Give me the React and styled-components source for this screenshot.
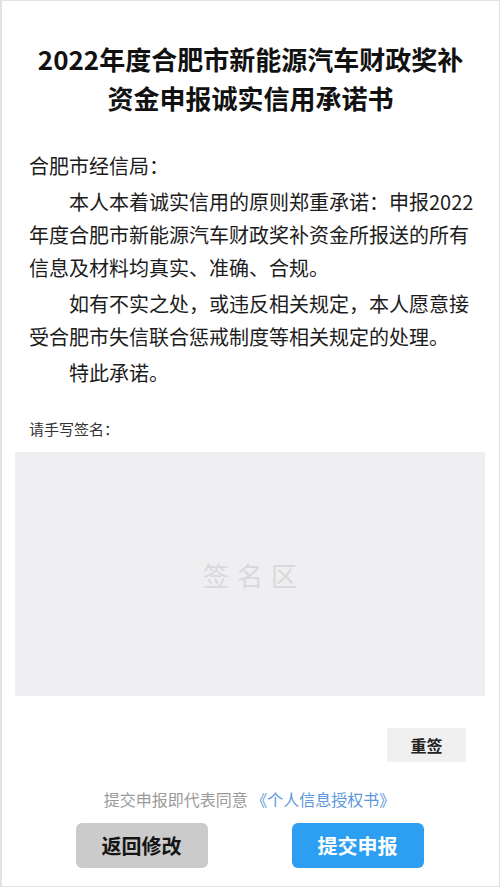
import React from "react";
import styled, { createGlobalStyle } from "styled-components";

const Global = createGlobalStyle`
  html, body { margin: 0; padding: 0; background: #fff; }
  * { box-sizing: border-box; }
  body { font-family: "Noto Sans CJK SC", "Noto Sans", sans-serif; }
`;

const Page = styled.div`
  width: 500px;
  height: 887px;
  border: 1px solid #e2e2e2;
  border-left-width: 2px;
  background: #fff;
  display: flex;
  flex-direction: column;
  padding-top: 38px;
  color: #1c1c1c;
`;

const Title = styled.h1`
  margin: 0;
  font-size: 26px;
  line-height: 39px;
  font-weight: 700;
  text-align: center;
  color: #111;
  letter-spacing: 0;
`;

const Letter = styled.div`
  margin-top: 32px;
  padding: 0 20px 0 27px;
  font-size: 20px;
  line-height: 33px;
  display: flex;
  flex-direction: column;
  gap: 3px;
`;

const Para = styled.p`
  margin: 0;
  text-indent: ${(p) => (p.$indent ? "2em" : "0")};
`;

const Label = styled.div`
  margin-top: 30px;
  padding-left: 27px;
  font-size: 15px;
  line-height: 20px;
  color: #333;
`;

const SignBox = styled.div`
  margin: 13px 14px 0 13px;
  height: 244px;
  background: #efeef0;
  display: flex;
  align-items: center;
  justify-content: center;
`;

const SignHint = styled.span`
  font-size: 26px;
  letter-spacing: 8px;
  margin-right: -8px;
  color: #d9d9dc;
`;

const ResetRow = styled.div`
  margin-top: 32px;
  display: flex;
  justify-content: flex-end;
  padding-right: 33px;
`;

const ResetButton = styled.button`
  width: 79px;
  height: 34px;
  border: none;
  background: #f0f0f0;
  font-family: inherit;
  font-size: 16px;
  font-weight: 700;
  color: #222;
  padding: 0;
`;

const Agree = styled.div`
  margin-top: 26px;
  text-align: center;
  font-size: 16px;
  line-height: 22px;
  color: #9a9a9a;
  padding-right: 2px;
`;

const AgreeLink = styled.span`
  color: #5b97da;
`;

const Actions = styled.div`
  margin-top: 13px;
  display: flex;
  justify-content: center;
  gap: 84px;
  padding-right: 2px;
`;

const ActionButton = styled.button`
  width: 132px;
  height: 45px;
  border: none;
  border-radius: 6px;
  font-family: inherit;
  font-size: 20px;
  font-weight: 700;
  padding: 0;
  background: ${(p) => (p.$primary ? "#2d9ff2" : "#cbcbcb")};
  color: ${(p) => (p.$primary ? "#fff" : "#151515")};
`;

export default function App() {
  return (
    <>
      <Global />
      <Page>
        <Title>
          2022年度合肥市新能源汽车财政奖补
          <br />
          资金申报诚实信用承诺书
        </Title>
        <Letter>
          <Para>合肥市经信局：</Para>
          <Para $indent>
            本人本着诚实信用的原则郑重承诺：申报2022年度合肥市新能源汽车财政奖补资金所报送的所有信息及材料均真实、准确、合规。
          </Para>
          <Para $indent>
            如有不实之处，或违反相关规定，本人愿意接受合肥市失信联合惩戒制度等相关规定的处理。
          </Para>
          <Para $indent>特此承诺。</Para>
        </Letter>
        <Label>请手写签名：</Label>
        <SignBox>
          <SignHint>签名区</SignHint>
        </SignBox>
        <ResetRow>
          <ResetButton>重签</ResetButton>
        </ResetRow>
        <Agree>
          提交申报即代表同意 <AgreeLink>《个人信息授权书》</AgreeLink>
        </Agree>
        <Actions>
          <ActionButton>返回修改</ActionButton>
          <ActionButton $primary>提交申报</ActionButton>
        </Actions>
      </Page>
    </>
  );
}
